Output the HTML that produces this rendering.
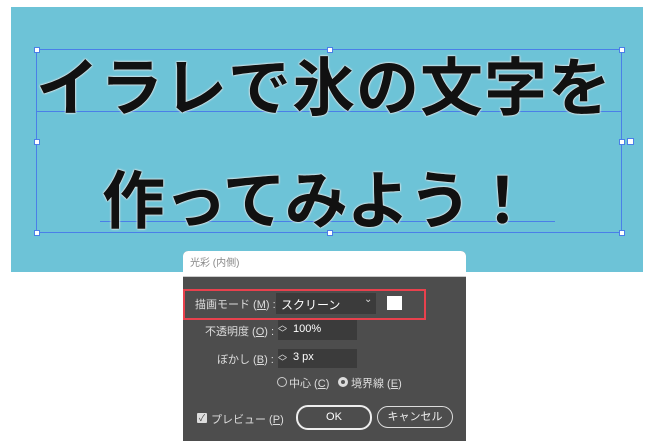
<html><head><style>
body{margin:0;width:650px;height:436px;background:#fff;position:relative;overflow:hidden;font-family:"Liberation Sans","Noto Sans CJK JP",sans-serif}
.bg{position:absolute;left:11px;top:7px;width:632px;height:265px;background:#6dc3d7}
.t{position:absolute;font-family:"Noto Sans CJK JP",sans-serif;font-weight:700;color:#111;white-space:nowrap;text-shadow:0 0 1px #fff,0 0 2px #eee,0 0 2px #ddd}
.ln{position:absolute;background:#4a7fe8;}
.h{position:absolute;width:4px;height:4px;background:#fff;border:1px solid #4a7fe8}
.dlg{position:absolute;left:183px;top:251px;width:283px;height:190px;border-radius:5px 5px 0 0;overflow:hidden;background:#4d4d4d}
.title{height:25px;background:#fff;font-size:10px;color:#888;line-height:25px;padding-left:7px;border-bottom:1px solid #ccc}
.a{position:absolute;font-size:11px;color:#ddd;white-space:nowrap}
.inp{position:absolute;background:#3b3b3b;}
</style></head><body>
<div class="bg"></div>
<div class="ln" style="left:36px;top:49px;width:585px;height:1px"></div>
<div class="ln" style="left:36px;top:232px;width:585px;height:1px"></div>
<div class="ln" style="left:36px;top:49px;width:1px;height:184px"></div>
<div class="ln" style="left:621px;top:49px;width:1px;height:184px"></div>
<div class="ln" style="left:36px;top:111px;width:585px;height:1px"></div>
<div class="ln" style="left:100px;top:221px;width:455px;height:1px"></div>
<div class="t" style="left:36px;top:38px;font-size:63px;letter-spacing:1px">イラレで氷の文字を</div>
<div class="t" style="left:102px;top:151px;font-size:63px;letter-spacing:-1px">作ってみよう！</div>
<div class="h" style="left:34px;top:47px"></div><div class="h" style="left:327px;top:47px"></div><div class="h" style="left:619px;top:47px"></div>
<div class="h" style="left:34px;top:139px"></div><div class="h" style="left:619px;top:139px"></div><div class="h" style="left:627px;top:138px;width:5px;height:5px"></div>
<div class="h" style="left:34px;top:230px"></div><div class="h" style="left:327px;top:230px"></div><div class="h" style="left:619px;top:230px"></div>
<div class="dlg">
<div class="title">光彩 (内側)</div>
</div>
<div style="position:absolute;left:183px;top:289px;width:239px;height:27px;border:2px solid #e8414d"></div>
<div class="a" style="left:195px;top:296px">描画モード (<u>M</u>) :</div>
<div class="inp" style="left:276px;top:293px;width:100px;height:21px"></div>
<div class="a" style="left:281px;top:296px;color:#fff;font-size:12px">スクリーン</div>
<div class="a" style="left:364px;top:294px;font-size:10px">⌄</div>
<div style="position:absolute;left:387px;top:296px;width:15px;height:14px;background:#fff"></div>
<div class="a" style="left:205px;top:323px">不透明度 (<u>O</u>) :</div>
<div class="inp" style="left:278px;top:320px;width:79px;height:20px"></div>
<div class="a" style="left:278px;top:321px;font-size:9px;line-height:8px">︿<br>﹀</div>
<div class="a" style="left:293px;top:323px;color:#fff">100%</div>
<div class="a" style="left:217px;top:351px">ぼかし (<u>B</u>) :</div>
<div class="inp" style="left:278px;top:349px;width:79px;height:19px"></div>
<div class="a" style="left:278px;top:350px;font-size:9px;line-height:8px">︿<br>﹀</div>
<div class="a" style="left:293px;top:351px;color:#fff">3 px</div>
<div style="position:absolute;left:277px;top:377px;width:8px;height:8px;border:1px solid #ccc;border-radius:50%"></div>
<div class="a" style="left:289px;top:375px">中心 (<u>C</u>)</div>
<div style="position:absolute;left:338px;top:377px;width:8px;height:8px;background:#ddd;border:1px solid #ddd;border-radius:50%"><div style="margin:2px;width:4px;height:4px;border-radius:50%;background:#555"></div></div>
<div class="a" style="left:351px;top:375px">境界線 (<u>E</u>)</div>
<div style="position:absolute;left:197px;top:413px;width:10px;height:10px;background:#ddd;border-radius:1px;color:#444;font-size:9px;line-height:10px;text-align:center">✓</div>
<div class="a" style="left:211px;top:411px">プレビュー (<u>P</u>)</div>
<div style="position:absolute;left:296px;top:405px;width:72px;height:21px;border:2px solid #eee;border-radius:12px;color:#fff;font-size:11px;text-align:center;line-height:21px">OK</div>
<div style="position:absolute;left:377px;top:406px;width:74px;height:20px;border:1px solid #ddd;border-radius:11px;color:#eee;font-size:11px;text-align:center;line-height:20px">キャンセル</div>
</body></html>
